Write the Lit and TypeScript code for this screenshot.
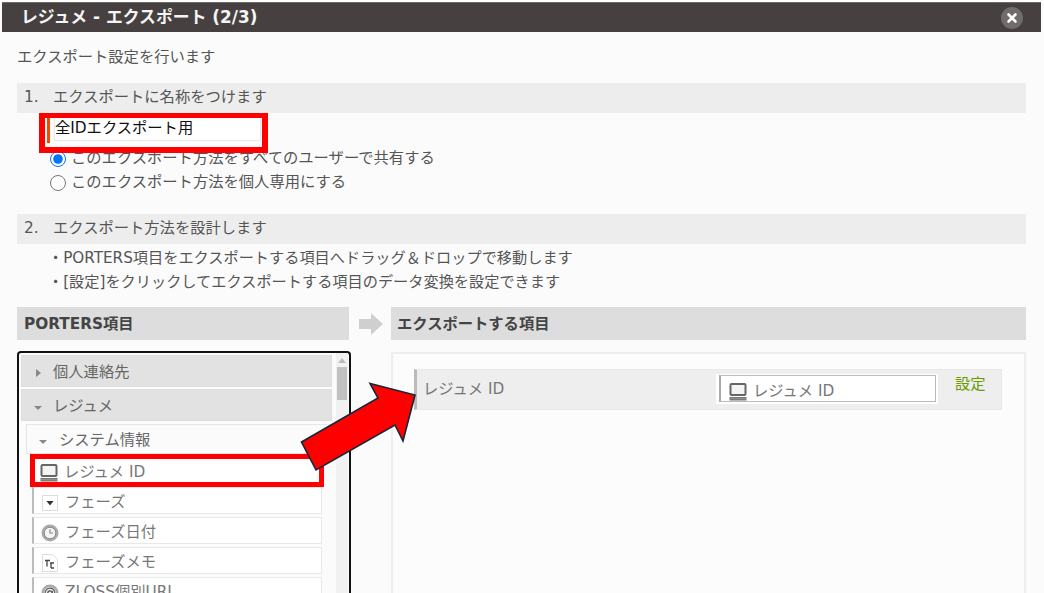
import { LitElement, html, css, svg } from "lit";
import { customElement } from "lit/decorators.js";

const monitor = html`<svg class="ic" viewBox="0 0 18 18" width="18" height="18"><rect x="1.5" y="1" width="15" height="11" rx="1" fill="#f4f4f4" stroke="#666" stroke-width="2"/><rect x="0.5" y="14" width="17" height="3.5" fill="#777"/><line x1="1" y1="15.7" x2="17" y2="15.7" stroke="#aaa" stroke-width=".6"/></svg>`;
const drop = html`<svg class="ic" viewBox="0 0 18 18" width="18" height="18"><rect x="1.5" y="1.5" width="15" height="15" fill="#fff" stroke="#ddd"/><path d="M5.5 7h7L9 11.5z" fill="#333"/></svg>`;
const clock = html`<svg class="ic" viewBox="0 0 18 18" width="18" height="18"><circle cx="9" cy="9" r="8.5" fill="#aaa"/><circle cx="9" cy="9" r="5.8" fill="#f3f3f3" stroke="#8a8a8a"/><path d="M9 5.5V9h3" fill="none" stroke="#888" stroke-width="1.2"/></svg>`;
const memo = html`<svg class="ic" viewBox="0 0 18 18" width="18" height="18"><path d="M1.5 .5h10l5 5v12h-15z" fill="#fff" stroke="#ddd"/><path d="M4 6.5h5M6 6.5v6M9 9h4M10 9v5M10 14h3" fill="none" stroke="#444" stroke-width="1.3"/></svg>`;
const at = html`<svg class="ic" viewBox="0 0 18 18" width="18" height="18"><circle cx="9" cy="9" r="8.5" fill="#aaa"/><circle cx="9" cy="9" r="6" fill="#eee"/><circle cx="9" cy="9" r="2.2" fill="none" stroke="#555" stroke-width="1.3"/><path d="M11.2 7v3.2c0 1.6 2.6 1.4 2.6-1.2A4.8 4.8 0 1 0 11.5 13" fill="none" stroke="#555" stroke-width="1.1"/></svg>`;
const closeX = svg`<path d="M7.5 7.5l7 7M14.5 7.5l-7 7" stroke="#fff" stroke-width="2.6" stroke-linecap="round"/>`;

@customElement("app-root")
export class AppRoot extends LitElement {
  static styles = css`
    :host {
      display: block;
      width: 1044px;
      height: 593px;
      overflow: hidden;
      position: relative;
      background: #fbfbfb;
      font-family: "DejaVu Sans", "Noto Sans CJK JP", sans-serif;
      font-size: 15.3px;
      color: #555;
      box-sizing: border-box;
    }
    * { box-sizing: border-box; }
    .top { height: 2px; background: #fff; }
    .title {
      height: 30px;
      margin: 0 3px 0 2px;
      background: #464140;
      border-top: 1px solid #6e6a69;
      color: #f4f4f4;
      font-weight: 700;
      font-size: 16.85px;
      display: flex;
      align-items: center;
      justify-content: space-between;
      padding: 0 19px;
      line-height: 1;
    }
    .title svg { display: block; margin-right: -1px; }
    .main { padding: 0 18px 0 17px; }
    .lead { height: 51px; display: flex; align-items: center; line-height: 1; }
    .bar {
      height: 30px;
      background: #ededed;
      display: flex;
      align-items: center;
      padding: 0 0 1px 7px;
      line-height: 1;
    }
    .num { width: 29px; }
    .namebox {
      position: relative;
      z-index: 1;
      width: 229px;
      height: 40px;
      margin-left: 22px;
      margin-bottom: -6px;
      border: solid #f00;
      border-width: 5px 6px 6px 6px;
      background: #fbfbfb;
      display: flex;
      align-items: flex-start;
      padding-left: 2px;
    }
    .namebox .mark { width: 3px; height: 25px; background: #f04a00; flex: none; }
    .namebox .inp {
      margin-left: 4px;
      width: 207px;
      height: 23px;
      background: #fff;
      border: 1px solid #e8e8e8;
      border-top: none;
      color: #111;
      display: flex;
      align-items: center;
      padding: 0;
      line-height: 1;
      white-space: nowrap;
    }
    .radios { padding-left: 33px; height: 67px; display: flex; flex-direction: column; }
    .radio { height: 24px; display: flex; align-items: center; gap: 5px; line-height: 1; }
    .radio input { width: 16px; height: 16px; margin: 0; accent-color: #0075ff; flex: none; }
    .notes { padding: 3px 0 0 31px; height: 63px; font-size: 15.2px; }
    .notes div { height: 24px; display: flex; align-items: center; line-height: 1; white-space: nowrap; }
    .cols { display: flex; align-items: flex-start; }
    .left { width: 334px; flex: none; }
    .arrow { width: 40px; flex: none; height: 33px; display: flex; align-items: center; justify-content: center; }
    .right { flex: 1; min-width: 0; }
    .head {
      height: 33px;
      background: #ddd;
      font-weight: 700;
      color: #444;
      display: flex;
      align-items: center;
      padding: 3px 0 0 7px;
      line-height: 1;
    }
    .left .head { width: 332px; }
    .right .head { padding-left: 6px; }
    .tree {
      margin-top: 11px;
      height: 300px;
      border: 2px solid #111;
      border-bottom: none;
      border-radius: 4px 4px 0 0;
      padding: 2px 1px 0 2px;
      display: flex;
      background: #fbfbfb;
    }
    .tlist { width: 311px; flex: none; }
    .scroll { width: 13px; margin-left: 4px; margin-top: -2px; background: #f1f1f1; position: relative; padding-top: 13px; }
    .scroll .up { width: 0; height: 0; margin: -8px auto 3px; border: 4px solid transparent; border-top: none; border-bottom: 5px solid #bbb; }
    .scroll .thumb { height: 33px; margin: 4px 1px 0; background: #c1c1c1; }
    .group {
      height: 32px;
      background: #e2e2e2;
      border: 1px solid #ddd;
      margin-bottom: 2px;
      display: flex;
      align-items: center;
      padding-top: 4px;
      line-height: 1;
      color: #666;
    }
    .sub {
      height: 30px;
      width: 306px;
      margin-left: 5px;
      margin-top: 3px;
      border: 1px solid #e6e6e6;
      display: flex;
      align-items: center;
      padding-top: 4px;
      line-height: 1;
      color: #666;
    }
    .tri-r { width: 0; height: 0; margin: 0 12px 0 14px; border: 4px solid transparent; border-left: 5px solid #888; border-right: none; }
    .tri-d { width: 0; height: 0; margin: 2px 11px 0 12px; border: 4px solid transparent; border-top: 4px solid #888; border-bottom: none; }
    .sub .tri-d { margin: 2px 12px 0 12px; }
    .items { margin-left: 11px; width: 290px; }
    .item {
      height: 27px;
      margin-bottom: 3px;
      background: #fff;
      border: 1px solid #e8e8e8;
      border-left: 2px solid #bbb;
      display: flex;
      align-items: center;
      gap: 6px;
      padding: 4px 0 0 7px;
      line-height: 1;
      color: #777;
      white-space: nowrap;
    }
    .item.hl {
      position: relative;
      width: 294px;
      height: 33px;
      margin: 0 0 0 -2px;
      border: 5px solid #f00;
      padding: 4px 0 0 5px;
      z-index: 1;
    }
    .ic { flex: none; display: block; }
    .drop {
      margin-top: 12px;
      height: 300px;
      background: #fcfcfc;
      border: 2px solid #eee;
      border-bottom: none;
      padding: 15px 22px 0 21px;
    }
    .row {
      height: 41px;
      background: #eee;
      border: 1px solid #e8e8e8;
      border-left: 3px solid #bbb;
      display: flex;
      align-items: center;
      padding-left: 6px;
      color: #777;
      line-height: 1;
    }
    .row .lbl { width: 293px; flex: none; }
    .field {
      width: 222px;
      height: 30px;
      flex: none;
      background: #fff;
      padding: 1px 2px 2px 3px;
      margin-top: -2px;
    }
    .field .in {
      height: 100%;
      border: 1px solid #bbb;
      border-left: 2px solid #aaa;
      display: flex;
      align-items: center;
      gap: 6px;
      padding: 7px 0 0 8px;
      color: #777;
    }
    .set { margin-left: 17px; margin-top: -10px; color: #6b9a00; }
    .callout { position: absolute; left: 0; top: 0; z-index: 2; pointer-events: none; }
  `;

  render() {
    return html`
      <div class="top"></div>
      <div class="title">
        <span>レジュメ - エクスポート (2/3)</span>
        <svg viewBox="0 0 22 22" width="22" height="22">
          <circle cx="11" cy="11" r="11" fill="#6f6c6b"/>${closeX}
        </svg>
      </div>
      <div class="main">
        <div class="lead">エクスポート設定を行います</div>
        <div class="bar"><span class="num">1.</span>エクスポートに名称をつけます</div>
        <div class="namebox">
          <span class="mark"></span>
          <div class="inp">全IDエクスポート用</div>
        </div>
        <div class="radios">
          <label class="radio"><input type="radio" name="s" checked />このエクスポート方法をすべてのユーザーで共有する</label>
          <label class="radio"><input type="radio" name="s" />このエクスポート方法を個人専用にする</label>
        </div>
        <div class="bar"><span class="num">2.</span>エクスポート方法を設計します</div>
        <div class="notes">
          <div>・PORTERS項目をエクスポートする項目へドラッグ＆ドロップで移動します</div>
          <div>・[設定]をクリックしてエクスポートする項目のデータ変換を設定できます</div>
        </div>
        <div class="cols">
          <div class="left">
            <div class="head">PORTERS項目</div>
            <div class="tree">
              <div class="tlist">
                <div class="group"><span class="tri-r"></span>個人連絡先</div>
                <div class="group"><span class="tri-d"></span>レジュメ</div>
                <div class="sub"><span class="tri-d"></span>システム情報</div>
                <div class="items">
                  <div class="item hl">${monitor}レジュメ ID</div>
                  <div class="item">${drop}フェーズ</div>
                  <div class="item">${clock}フェーズ日付</div>
                  <div class="item">${memo}フェーズメモ</div>
                  <div class="item">${at}ZLOSS個別URL</div>
                </div>
              </div>
              <div class="scroll"><div class="up"></div><div class="thumb"></div></div>
            </div>
          </div>
          <div class="arrow">
            <svg viewBox="0 0 24 22" width="24" height="22"><path d="M0 6h12V0l12 11-12 11v-6H0z" fill="#cfcfcf"/></svg>
          </div>
          <div class="right">
            <div class="head">エクスポートする項目</div>
            <div class="drop">
              <div class="row">
                <span class="lbl">レジュメ ID</span>
                <div class="field"><div class="in">${monitor}レジュメ ID</div></div>
                <span class="set">設定</span>
              </div>
            </div>
          </div>
        </div>
      </div>
      <svg class="callout" width="1044" height="593" viewBox="0 0 1044 593">
        <path d="M301.5 442L378 398L370 383.5L415 395L403 441L395 425L316 470Z" fill="#f00" stroke="#10293a" stroke-width="1.6" stroke-linejoin="miter"/>
      </svg>
    `;
  }
}
